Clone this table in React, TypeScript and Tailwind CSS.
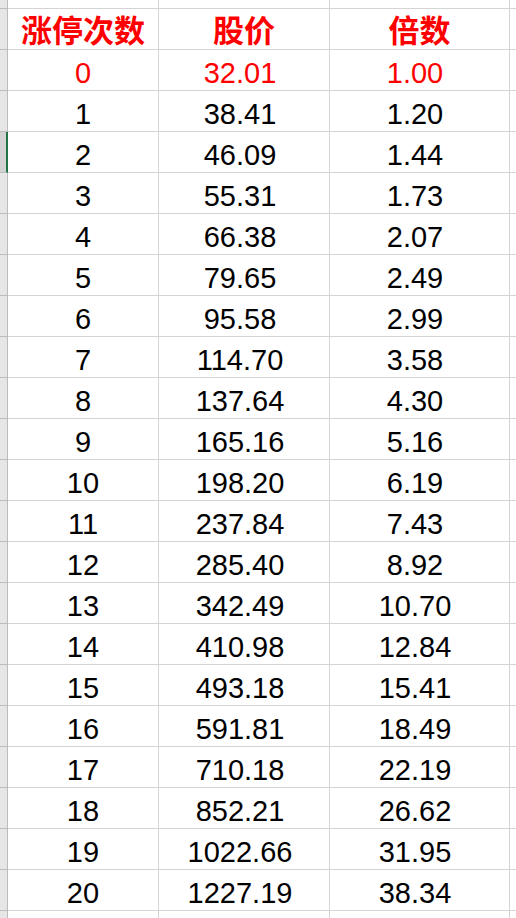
const rows: [string, string, string][] = [
  ["0", "32.01", "1.00"],
  ["1", "38.41", "1.20"],
  ["2", "46.09", "1.44"],
  ["3", "55.31", "1.73"],
  ["4", "66.38", "2.07"],
  ["5", "79.65", "2.49"],
  ["6", "95.58", "2.99"],
  ["7", "114.70", "3.58"],
  ["8", "137.64", "4.30"],
  ["9", "165.16", "5.16"],
  ["10", "198.20", "6.19"],
  ["11", "237.84", "7.43"],
  ["12", "285.40", "8.92"],
  ["13", "342.49", "10.70"],
  ["14", "410.98", "12.84"],
  ["15", "493.18", "15.41"],
  ["16", "591.81", "18.49"],
  ["17", "710.18", "22.19"],
  ["18", "852.21", "26.62"],
  ["19", "1022.66", "31.95"],
  ["20", "1227.19", "38.34"],
];

const colWidths = ["w-[151px]", "w-[171px]", "w-[180px]"];
// number-format columns carry a trailing pad, like "0.00_ "
const colPad = ["", "pr-[8px]", "pr-[9px]"];

// row header strip on the left (mostly scrolled out of view)
function RowHead({ selected = false, h }: { selected?: boolean; h: string }) {
  return selected ? (
    <div className={`${h} w-[8px] shrink-0 bg-[#d2d2d2] border-r-2 border-r-[#217346] border-b border-b-[#bcbcbc]`} />
  ) : (
    <div className={`${h} w-[8px] shrink-0 bg-[#e6e6e6] border-r border-b border-[#bcbcbc]`} />
  );
}

function Cell({
  w,
  children,
  className = "",
}: {
  w: string;
  children?: React.ReactNode;
  className?: string;
}) {
  return (
    <div
      className={`${w} h-[41px] shrink-0 flex items-end justify-center border-r border-b border-[#d4d4d4] ${className}`}
    >
      {children}
    </div>
  );
}

export default function App() {
  return (
    <div className="w-[516px] h-[918px] overflow-hidden bg-white font-['Liberation_Sans',Arial,sans-serif]">
      <div className="flex">
        <RowHead h="h-[9px]" />
        {colWidths.map((w) => (
          <div key={w} className={`${w} h-[9px] shrink-0 border-r border-b border-[#d4d4d4]`} />
        ))}
        <div className="flex-1 h-[9px] border-b border-[#d4d4d4]" />
      </div>

      <div className="flex">
        <RowHead h="h-[41px]" />
        {["涨停次数", "股价", "倍数"].map((t, i) => (
          <Cell key={t} w={colWidths[i]} className="items-center">
            <span className="font-['Noto_Sans_CJK_SC',sans-serif] font-bold text-[31px] leading-[40px] text-[#ff0000] pt-[1px]">
              {t}
            </span>
          </Cell>
        ))}
        <div className="flex-1 h-[41px] border-b border-[#d4d4d4]" />
      </div>

      {rows.map((r, ri) => (
        <div key={r[0]} className="flex">
          <RowHead h="h-[41px]" selected={ri === 2} />
          {r.map((v, i) => (
            <Cell key={i} w={colWidths[i]} className={colPad[i]}>
              <span
                className={`text-[29px] leading-[34px] ${ri === 0 ? "text-[#ff0000]" : "text-black"}`}
              >
                {v}
              </span>
            </Cell>
          ))}
          <div className="flex-1 h-[41px] border-b border-[#d4d4d4]" />
        </div>
      ))}

      <div className="flex">
        <RowHead h="h-[41px]" />
        {colWidths.map((w) => (
          <div key={w} className={`${w} h-[41px] shrink-0 border-r border-[#d4d4d4]`} />
        ))}
      </div>
    </div>
  );
}
